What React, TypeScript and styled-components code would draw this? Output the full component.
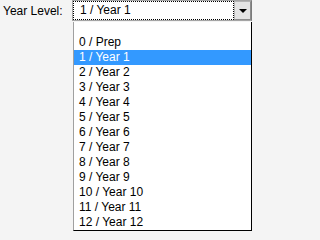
import React, { FC, useState } from 'react'
import styled, { createGlobalStyle } from 'styled-components';

const GlobalStyle = createGlobalStyle`
    body {
        margin: 0;
        background: #f4f4f4;
        font-family: "Liberation Sans", Arial, sans-serif;
        font-size: 12px;
        color: #000;
    }
`;

const Field = styled.div`
    display: flex;
    align-items: flex-start;
    height: 231px;
`;

const Label = styled.label`
    width: 69px;
    padding: 4px 0 0 3px;
    line-height: 14px;
`;

const Combo = styled.div`
    position: relative;
    width: 180px;
`;

const Box = styled.div`
    display: flex;
    height: 21px;
    box-sizing: border-box;
    border: 1px solid #a5a5a5;
    border-right-color: #7a7a7a;
    background: #fff;
`;

const Value = styled.div`
    flex: 1;
    box-sizing: border-box;
    border: 1px dotted #000;
    padding-left: 6px;
    line-height: 17px;
    white-space: nowrap;
    overflow: hidden;
`;

const ArrowButton = styled.div`
    display: flex;
    align-items: center;
    justify-content: center;
    width: 17px;
    box-sizing: border-box;
    background: #e4e4e4;
    border: 1px solid #b4b4b4;
    border-right-color: #8c8c8c;
    border-bottom-color: #8c8c8c;
`;

const Arrow = styled.span`
    width: 0;
    height: 0;
    border-left: 4px solid transparent;
    border-right: 4px solid transparent;
    border-top: 4px solid #000;
`;

const List = styled.ul`
    position: absolute;
    top: 22px;
    left: 1px;
    right: 0;
    margin: 0;
    padding: 0;
    list-style: none;
    background: #fff;
    border-left: 1px solid #a0a0a0;
    border-right: 1px solid #000;
    border-bottom: 1px solid #000;
`;

const Option = styled.li<{ $selected?: boolean; $blank?: boolean }>`
    height: ${p => (p.$blank ? '13px' : '15px')};
    line-height: 15px;
    padding-left: 5px;
    white-space: nowrap;
    cursor: default;
    background: ${p => (p.$selected ? '#3399ff' : 'transparent')};
    color: ${p => (p.$selected ? '#fff' : '#000')};
`;

const levels = [
    { id: 0, name: '0 / Prep' },
    ...Array.from({ length: 12 }, (_, i) => ({ id: i + 1, name: `${i + 1} / Year ${i + 1}` })),
];

const App: FC = () => {

    const [selected, setSelected] = useState<number>(1);

    const current = levels.find(item => item.id === selected);

    return (
        <>
            <GlobalStyle />
            <Field>
                <Label>Year Level:</Label>
                <Combo>
                    <Box>
                        <Value>{current ? current.name : ''}</Value>
                        <ArrowButton>
                            <Arrow />
                        </ArrowButton>
                    </Box>
                    <List>
                        <Option $blank />
                        {
                            levels.map(item => {
                                return <Option
                                    key={item.id}
                                    $selected={item.id === selected}
                                    onClick={() => setSelected(item.id)}
                                >{item.name}</Option>
                            })
                        }
                    </List>
                </Combo>
            </Field>
        </>
    )
}

export default App
